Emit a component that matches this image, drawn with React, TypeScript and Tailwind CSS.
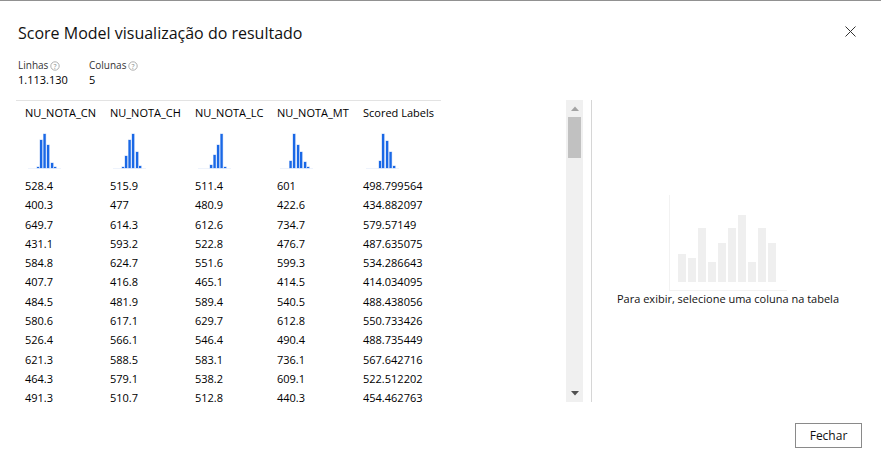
import React from "react";

const rows: string[][] = [
  ["528.4", "515.9", "511.4", "601", "498.799564"],
  ["400.3", "477", "480.9", "422.6", "434.882097"],
  ["649.7", "614.3", "612.6", "734.7", "579.57149"],
  ["431.1", "593.2", "522.8", "476.7", "487.635075"],
  ["584.8", "624.7", "551.6", "599.3", "534.286643"],
  ["407.7", "416.8", "465.1", "414.5", "414.034095"],
  ["484.5", "481.9", "589.4", "540.5", "488.438056"],
  ["580.6", "617.1", "629.7", "612.8", "550.733426"],
  ["526.4", "566.1", "546.4", "490.4", "488.735449"],
  ["621.3", "588.5", "583.1", "736.1", "567.642716"],
  ["464.3", "579.1", "538.2", "609.1", "522.512202"],
  ["491.3", "510.7", "512.8", "440.3", "454.462763"],
];

const headers = ["NU_NOTA_CN", "NU_NOTA_CH", "NU_NOTA_LC", "NU_NOTA_MT", "Scored Labels"];
const widths = ["w-[85px]", "w-[85px]", "w-[82px]", "w-[86px]", "w-[87px]"];

const hists: [number, number][][] = [
  [[12, 1], [15, 28], [18.5, 34], [22, 23], [26, 5], [29, 1]],
  [[12, 1], [15, 12], [18.5, 28], [22, 34], [26, 16], [29, 2]],
  [[15, 3], [18.5, 13], [22, 23], [25.5, 34], [29, 1]],
  [[12.5, 7], [16, 34], [20, 23], [23, 16], [27, 6], [30, 1]],
  [[16, 7], [19, 34], [23, 27], [26.5, 16], [30, 2]],
];

function Hist({ bars }: { bars: [number, number][] }) {
  return (
    <svg width="48" height="36" viewBox="0 0 48 36" className="block">
      <line x1="3" y1="35.5" x2="36" y2="35.5" stroke="#eef3fc" strokeWidth="1" />
      {bars.map(([x, h], i) => (
        <g key={i}>
          <rect x={x - 0.5} y={35 - h - 0.5} width={3.2} height={h + 1} fill="#bcd2f7" />
          <rect x={x} y={35 - h} width={2.2} height={h} fill="#1a68e6" />
        </g>
      ))}
    </svg>
  );
}

function Help() {
  return (
    <svg width="10" height="10" viewBox="0 0 10 10" className="inline-block ml-[2px] -mt-[1px] align-middle">
      <circle cx="5" cy="5" r="4.2" fill="none" stroke="#9a9a9a" strokeWidth="0.8" />
      <text x="5" y="7.6" textAnchor="middle" fontSize="7" fill="#8a8a8a" fontFamily="Open Sans, sans-serif">?</text>
    </svg>
  );
}

const chartBars = [59, 63, 33, 67, 48, 33, 20, 67, 33, 48];

export default function App() {
  return (
    <div className="w-[881px] h-[468px] bg-white border-t border-[#919191] flex flex-col font-['Open_Sans',sans-serif] text-[#000] overflow-hidden">
      <div className="flex items-start justify-between pl-[18px] pr-[25px] pt-[20px]">
        <div className="text-[16px] leading-[24px] text-[#111]">Score Model visualização do resultado</div>
        <button className="mt-[5px] w-[11px] h-[11px] flex items-center justify-center">
          <svg width="11" height="11" viewBox="0 0 11 11">
            <path d="M0.5 0.5 L10.5 10.5 M10.5 0.5 L0.5 10.5" stroke="#333" strokeWidth="1" />
          </svg>
        </button>
      </div>

      <div className="flex pl-[18px] mt-[13px]">
        <div className="w-[71px]">
          <div className="text-[10px] leading-[14px] text-[#333]">Linhas<Help /></div>
          <div className="text-[11px] leading-[16px]">1.113.130</div>
        </div>
        <div>
          <div className="text-[10px] leading-[14px] text-[#333]">Colunas<Help /></div>
          <div className="text-[11px] leading-[16px]">5</div>
        </div>
      </div>

      <div className="flex h-[302px] mt-[12px]">
        <div className="flex pl-[16px] w-[566px]">
          <div className="border-t border-[#e3e3e3] h-fit">
            <div className="flex">
              {headers.map((h, i) => (
                <div key={i} className={`${widths[i]} pl-[9px] h-[24px] flex items-center text-[11px] whitespace-nowrap`}>
                  {h}
                </div>
              ))}
            </div>
            <div className="flex h-[51px] pt-[8px]">
              {hists.map((b, i) => (
                <div key={i} className={`${widths[i]} pl-[9px]`}>
                  <Hist bars={b} />
                </div>
              ))}
            </div>
            {rows.map((r, ri) => (
              <div key={ri} className="flex h-[19.27px] items-center">
                {r.map((c, ci) => (
                  <div key={ci} className={`${widths[ci]} pl-[9px] text-[11px] leading-[13px] whitespace-nowrap`}>
                    {c}
                  </div>
                ))}
              </div>
            ))}
          </div>
        </div>

        <div className="w-[17px] bg-[#f0f0f0] flex flex-col">
          <div className="h-[17px] flex items-center justify-center">
            <svg width="8" height="5" viewBox="0 0 8 5"><path d="M0 5 L4 0.5 L8 5 Z" fill="#a3a3a3" /></svg>
          </div>
          <div className="mx-[2px] h-[41px] bg-[#c1c1c1]" />
          <div className="flex-1" />
          <div className="h-[17px] flex items-center justify-center">
            <svg width="8" height="5" viewBox="0 0 8 5"><path d="M0 0 L8 0 L4 4.5 Z" fill="#505050" /></svg>
          </div>
        </div>

        <div className="ml-[8px] w-px bg-[#d6d6d6]" />

        <div className="flex-1 pr-[17px] flex flex-col items-center justify-center">
          <svg width="118" height="96" viewBox="0 0 118 96" className="block">
            <line x1="0.5" y1="0" x2="0.5" y2="96" stroke="#f2f2f2" strokeWidth="1" />
            <line x1="0" y1="95.5" x2="118" y2="95.5" stroke="#f2f2f2" strokeWidth="1" />
            {chartBars.map((t, i) => (
              <rect key={i} x={9 + i * 10} y={t} width={8} height={87 - t} fill="#efefef" />
            ))}
          </svg>
          <div className="text-[11px] leading-[16px] text-[#111] whitespace-nowrap">Para exibir, selecione uma coluna na tabela</div>
        </div>
      </div>

      <div className="flex justify-end pr-[19px] mt-[21px]">
        <button className="w-[67px] h-[25px] border border-[#8a8a8a] bg-white text-[12px] text-[#111] flex items-center justify-center">
          Fechar
        </button>
      </div>
    </div>
  );
}
